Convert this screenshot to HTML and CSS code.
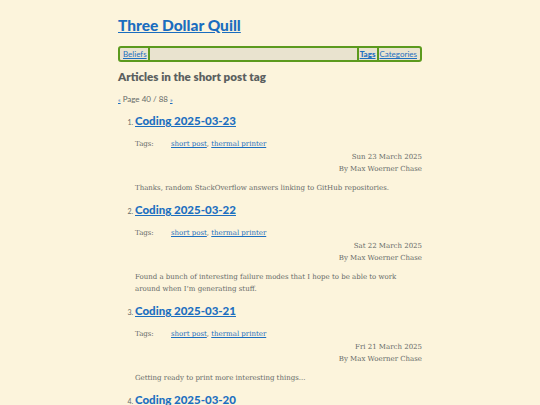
FILE: index.html
```html
<!DOCTYPE html>
<html lang="en">
<head>
<meta charset="utf-8">
<title>Three Dollar Quill</title>
<link rel="stylesheet" href="styles.css">
</head>
<body>
<div class="page">
  <header class="site-header">
    <h1 class="site-title"><a href="#">Three Dollar Quill</a></h1>
    <nav class="nav">
      <a class="nav-item nav-left" href="#">Beliefs</a>
      <span class="nav-spacer"></span>
      <a class="nav-item nav-current" href="#">Tags</a>
      <a class="nav-item" href="#">Categories</a>
    </nav>
  </header>
  <main>
    <h2 class="page-heading">Articles in the short post tag</h2>
    <p class="pager"><a href="#">«</a> Page 40 / 88 <a href="#">»</a></p>
    <ol class="posts">
      <li class="post">
        <h3 class="post-title"><a href="#">Coding 2025-03-23</a></h3>
        <div class="tags"><span class="tags-label">Tags:</span><span><a href="#">short post</a>, <a href="#">thermal printer</a></span></div>
        <p class="meta">Sun 23 March 2025</p>
        <p class="meta">By Max Woerner Chase</p>
        <p class="summary">Thanks, random StackOverflow answers linking to GitHub repositories.</p>
      </li>
      <li class="post">
        <h3 class="post-title"><a href="#">Coding 2025-03-22</a></h3>
        <div class="tags"><span class="tags-label">Tags:</span><span><a href="#">short post</a>, <a href="#">thermal printer</a></span></div>
        <p class="meta">Sat 22 March 2025</p>
        <p class="meta">By Max Woerner Chase</p>
        <p class="summary">Found a bunch of interesting failure modes that I hope to be able to work around when I’m generating stuff.</p>
      </li>
      <li class="post">
        <h3 class="post-title"><a href="#">Coding 2025-03-21</a></h3>
        <div class="tags"><span class="tags-label">Tags:</span><span><a href="#">short post</a>, <a href="#">thermal printer</a></span></div>
        <p class="meta">Fri 21 March 2025</p>
        <p class="meta">By Max Woerner Chase</p>
        <p class="summary">Getting ready to print more interesting things...</p>
      </li>
      <li class="post">
        <h3 class="post-title"><a href="#">Coding 2025-03-20</a></h3>
        <div class="tags"><span class="tags-label">Tags:</span><span><a href="#">short post</a>, <a href="#">thermal printer</a></span></div>
        <p class="meta">Thu 20 March 2025</p>
        <p class="meta">By Max Woerner Chase</p>
        <p class="summary">More printing.</p>
      </li>
    </ol>
  </main>
</div>
</body>
</html>
```

FILE: styles.css
```css
html, body {
  margin: 0;
  padding: 0;
  background: #fcf4dc;
}
body {
  font-family: "DejaVu Serif", serif;
  color: #666a68;
  font-size: 7px;
  line-height: 12px;
}
a {
  color: #1d6fc0;
}
.page {
  width: 304px;
  margin: 0 auto;
  padding-top: 14px;
}
.site-title {
  margin: 0;
  font-family: "Lato", sans-serif;
  font-weight: 900;
  font-size: 15.5px;
  line-height: 22px;
}
.site-title a {
  color: #1a6dbf;
}
.nav {
  display: flex;
  margin-top: 10px;
  border: 2px solid #5c9a1e;
  border-radius: 3px;
  background: #e9e3cf;
  padding: 0 2px;
  font-family: "Lato", sans-serif;
  font-size: 8px;
  line-height: 12px;
}
.nav-item {
  padding: 0 1px;
}
.nav-left {
  border-right: 2px solid #5c9a1e;
}
.nav-spacer {
  flex: 1;
}
.nav-current {
  font-weight: 900;
  border-left: 2px solid #5c9a1e;
  border-right: 2px solid #5c9a1e;
}
.page-heading {
  margin: 7px 0 0;
  font-family: "Lato", sans-serif;
  font-weight: 800;
  font-size: 11.6px;
  line-height: 16px;
  color: #5b605f;
}
.pager {
  margin: 8px 0 0;
  font-family: "Lato", sans-serif;
  font-size: 8px;
}
.pager a {
  font-size: 6px;
}
.posts {
  margin: 7px 0 0;
  padding-left: 17px;
}
.post {
  font-family: "Lato", sans-serif;
  font-size: 7px;
}
.post-title {
  margin: 0;
  font-family: "Lato", sans-serif;
  font-weight: 900;
  font-size: 11.5px;
  line-height: 16px;
}
.tags {
  display: flex;
  margin-top: 9px;
  font-family: "DejaVu Serif", serif;
  font-size: 7px;
}
.tags-label {
  width: 36px;
}
.meta {
  margin: 1px 0 0;
  text-align: right;
  font-family: "DejaVu Serif", serif;
  font-size: 7px;
}
.meta + .meta {
  margin-top: 0;
}
.summary {
  margin: 7px 0 8px;
  font-family: "DejaVu Serif", serif;
  font-size: 7px;
}
```
